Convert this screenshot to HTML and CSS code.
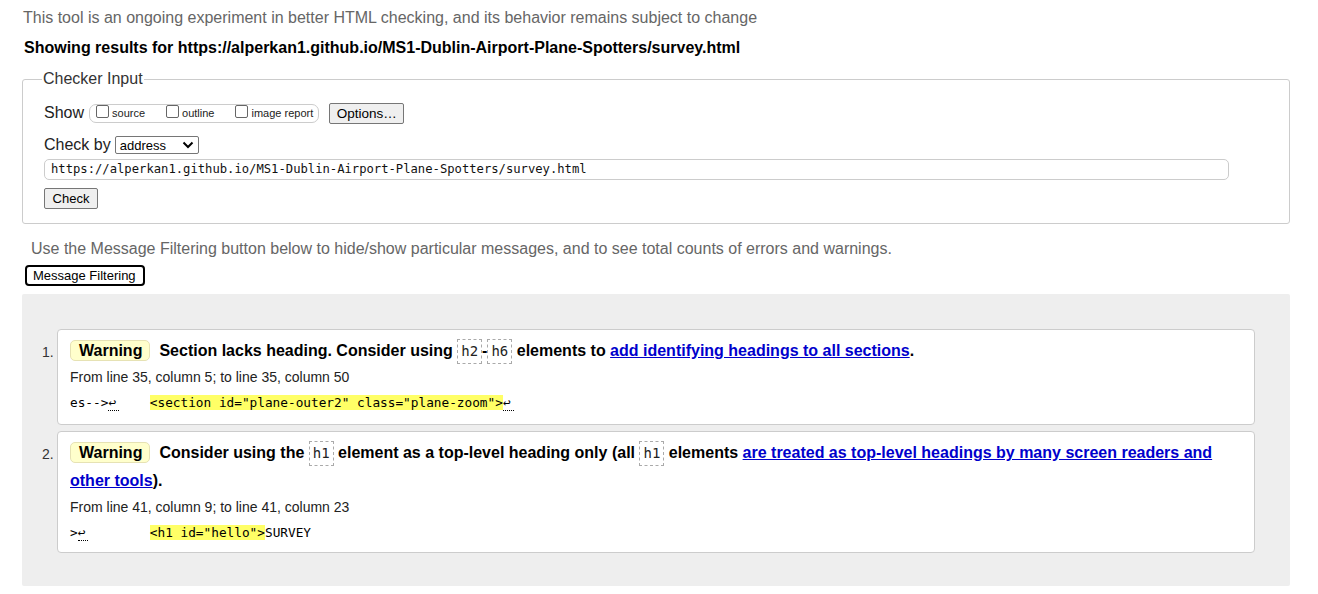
FILE: index.html
```html
<!DOCTYPE html>
<html>
<head>
<meta charset="utf-8">
<link rel="stylesheet" href="styles.css">
</head>
<body>
<div class="page">
  <p class="intro">This tool is an ongoing experiment in better HTML checking, and its behavior remains subject to change</p>
  <p class="showing">Showing results for https://alperkan1.github.io/MS1-Dublin-Airport-Plane-Spotters/survey.html</p>
  <fieldset class="checker">
    <legend>Checker Input</legend>
    <div class="row show-row">
      <span class="lbl">Show</span>
      <span class="opts">
        <label><span class="cb"></span>source</label>
        <label><span class="cb"></span>outline</label>
        <label><span class="cb"></span>image report</label>
      </span>
      <span class="btn options">Options…</span>
    </div>
    <div class="row by-row">
      <span class="lbl">Check by</span>
      <span class="select">address<svg width="12" height="8" viewBox="0 0 12 8"><path d="M1.5 1.5 L6 6 L10.5 1.5" fill="none" stroke="#000" stroke-width="2"/></svg></span>
    </div>
    <div class="url">https://alperkan1.github.io/MS1-Dublin-Airport-Plane-Spotters/survey.html</div>
    <span class="btn check">Check</span>
  </fieldset>
  <p class="filter-note">Use the Message Filtering button below to hide/show particular messages, and to see total counts of errors and warnings.</p>
  <span class="filter-btn">Message Filtering</span>
  <div class="results">
    <ol class="msgs">
      <li class="msg">
        <p class="msg-line"><span class="badge">Warning</span><span class="txt">Section lacks heading. Consider using <code class="el">h2</code>-<code class="el">h6</code> elements to <a href="#">add identifying headings to all sections</a>.</span></p>
        <p class="loc">From line 35, column 5; to line 35, column 50</p>
        <p class="extract"><code>es--&gt;<span class="lf">↩</span>    <b class="hl">&lt;section id="plane-outer2" class="plane-zoom"&gt;</b><span class="lf">↩</span></code></p>
      </li>
      <li class="msg">
        <p class="msg-line"><span class="badge">Warning</span><span class="txt">Consider using the <code class="el">h1</code> element as a top-level heading only (all <code class="el">h1</code> elements <a href="#">are treated as top-level headings by many screen readers and other tools</a>).</span></p>
        <p class="loc">From line 41, column 9; to line 41, column 23</p>
        <p class="extract"><code>&gt;<span class="lf">↩</span>        <b class="hl">&lt;h1 id="hello"&gt;</b>SURVEY</code></p>
      </li>
    </ol>
  </div>
</div>
</body>
</html>
```
FILE: styles.css
```css
html, body { margin: 0; padding: 0; background: #fff; }
body { font-family: "Liberation Sans", Arial, sans-serif; color: #000; }
.page { padding: 8px 28px 8px 22px; }
p { margin: 0; }
.intro { color: #666; font-size: 16px; line-height: 18px; margin-left: 1px; margin-top: 1px; }
.showing { font-weight: bold; font-size: 16px; line-height: 18px; margin: 12px 0 0 2px; }
.checker {
  margin: 13px 0 0 0; padding: 6px 21px 14px 21px;
  border: 1px solid #ccc; border-radius: 3px;
}
.checker legend { font-size: 16px; padding: 0 1px; margin-left: -2px; color: #333; }
.row { display: flex; align-items: center; }
.lbl { font-size: 16px; color: #222; margin-right: 3px; }
.show-row .lbl { margin-right: 5px; }
.show-row { height: 22px; margin-top: 8px; }
.opts {
  display: inline-flex; align-items: center; gap: 21px;
  border: 1px solid #ccc; border-radius: 7px; padding: 0 5px 0 6px; height: 17px;
  font-size: 11px; color: #222;
}
.opts label { display: inline-flex; align-items: center; gap: 3px; }
.cb { border: 1px solid #666; border-radius: 2px; display: inline-block; margin-top: -4px; box-sizing: border-box; width: 13px; height: 13px; }
.btn {
  display: inline-flex; align-items: center; justify-content: center;
  border: 1px solid #767676; border-radius: 2px; background: #efefef;
  font-size: 13px; color: #000; height: 19px; box-sizing: border-box;
}
.options { margin-left: 10px; width: 75px; height: 21px; font-size: 13.5px; }
.by-row { margin-top: 11px; height: 20px; }
.select {
  display: inline-flex; align-items: center; justify-content: space-between;
  width: 84px; height: 18px; box-sizing: border-box; border: 1px solid #767676; border-radius: 2px;
  font-size: 13px; padding: 0 4px 0 4px; margin-left: 1px;
}
.url {
  margin-top: 4px; height: 21px; box-sizing: border-box; width: 1185px;
  border: 1px solid #ccc; border-radius: 5px;
  font-family: "DejaVu Sans Mono", "Liberation Mono", monospace; font-size: 12.2px;
  line-height: 19px; padding-left: 6px; color: #111;
}
.check { margin-top: 8px; width: 54px; height: 21px; }
.filter-note { color: #666; font-size: 16px; line-height: 18px; margin: 16px 0 0 9px; }
.filter-btn {
  display: inline-block; margin: 7px 0 0 3px; font-size: 13px; line-height: 15px;
  border: 2px solid #000; border-radius: 4px; padding: 1px 7px 1px 6px; background: #fff;
}
.results { background: #eee; margin-top: 8px; padding: 35px 35px 33px 35px; border-radius: 2px; }
.msgs { margin: 0; padding: 0; list-style: none; counter-reset: m; }
.msg {
  counter-increment: m; position: relative;
  background: #fff; border: 1px solid #ccc; border-radius: 4px;
  padding: 11px 12px 12px 12px;
}
.msg:first-child { padding-bottom: 13px; }
.msg + .msg { margin-top: 6px; padding-bottom: 11px; }
.msg::before {
  content: counter(m) "."; position: absolute; left: -16px; top: 14px;
  font-size: 14px; color: #333;
}
.msg-line { font-size: 16px; font-weight: bold; line-height: 28px; margin-top: -4px; }
.badge {
  display: inline-block; background: #ffffcc; border: 1px solid #e6e2b4; border-radius: 5px;
  padding: 0 7px 0 8px; line-height: 19px; margin-right: 9px;
}
.el {
  font-family: "DejaVu Sans Mono", "Liberation Mono", monospace; font-weight: normal; font-size: 14px;
  border: 1px dashed #aaa; padding: 3px 3px 4px 3px; color: #222;
}
a { color: #0000cc; text-decoration: underline; }
.loc { font-size: 14px; line-height: 18px; margin-top: 3px; color: #222; }
.extract { margin-top: 7px; line-height: 17px; }
.extract code { font-family: "DejaVu Sans Mono", "Liberation Mono", monospace; font-size: 12.75px; white-space: pre; }
.lf { border-bottom: 1px dotted #000; padding-right: 3px; }
.hl { background: #ffff66; font-weight: normal; }
```
